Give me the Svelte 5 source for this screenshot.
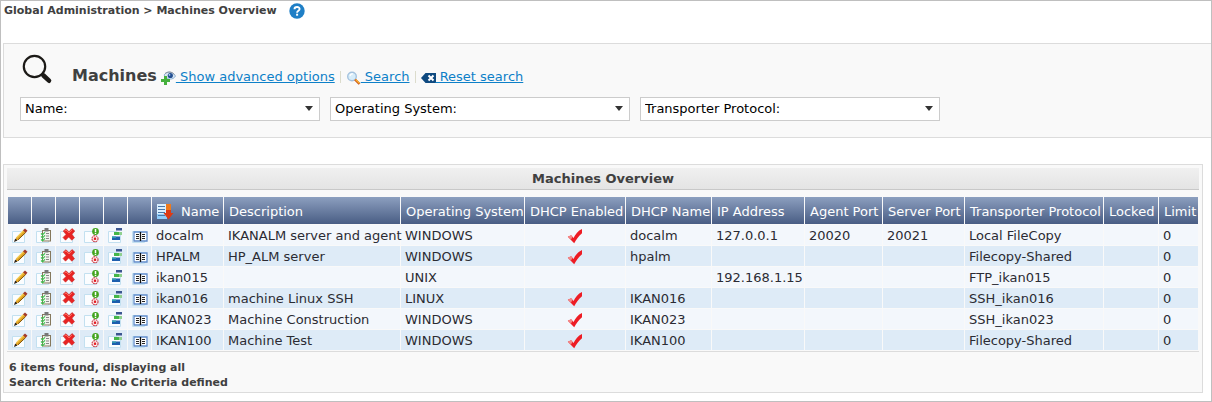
<script>
  const filters = [
    { id: 'name', label: 'Name:' },
    { id: 'os', label: 'Operating System:' },
    { id: 'protocol', label: 'Transporter Protocol:' }
  ];

  const actions = ['Edit', 'Installed phases', 'Delete', 'Status', 'Environments', 'History'];

  const columns = [
    ['Description', 176],
    ['Operating System', 123],
    ['DHCP Enabled', 100],
    ['DHCP Name', 85],
    ['IP Address', 92],
    ['Agent Port', 77],
    ['Server Port', 81],
    ['Transporter Protocol', 138],
    ['Locked', 54],
    ['Limit', 39]
  ];

  const machines = [
    { name: 'docalm', description: 'IKANALM server and agent', os: 'WINDOWS', dhcp: true, dhcpName: 'docalm', ip: '127.0.0.1', agent: '20020', server: '20021', protocol: 'Local FileCopy', limit: 0 },
    { name: 'HPALM', description: 'HP_ALM server', os: 'WINDOWS', dhcp: true, dhcpName: 'hpalm', ip: '', agent: '', server: '', protocol: 'Filecopy-Shared', limit: 0 },
    { name: 'ikan015', description: '', os: 'UNIX', dhcp: false, dhcpName: '', ip: '192.168.1.15', agent: '', server: '', protocol: 'FTP_ikan015', limit: 0 },
    { name: 'ikan016', description: 'machine Linux SSH', os: 'LINUX', dhcp: true, dhcpName: 'IKAN016', ip: '', agent: '', server: '', protocol: 'SSH_ikan016', limit: 0 },
    { name: 'IKAN023', description: 'Machine Construction', os: 'WINDOWS', dhcp: true, dhcpName: 'IKAN023', ip: '', agent: '', server: '', protocol: 'SSH_ikan023', limit: 0 },
    { name: 'IKAN100', description: 'Machine Test', os: 'WINDOWS', dhcp: true, dhcpName: 'IKAN100', ip: '', agent: '', server: '', protocol: 'Filecopy-Shared', limit: 0 }
  ];
</script>

{#snippet actionIcon(i)}
  <svg width="16" height="16" viewBox="0 0 16 16" aria-hidden="true">
    <path d="M.5 3.500H9L12.500 7V14.500H.5Z" fill="#fbfdff" stroke="#c3e0f0" />
    {#if i === 0}
      <path d="M3.200 12.500 4.500 9.300 11.500 2 14 4.300 6.500 11.800Z" fill="#e2a422" />
      <path d="M4.900 9.400 11.600 2.600" stroke="#f6d05a" stroke-width="1.200" />
      <path d="M6 11.800 13.700 4.500" stroke="#80540f" stroke-width="1" />
      <path d="M2 14 3.200 10.500 5.500 12.600Z" fill="#2b2419" />
      <path d="m11 2.300 2-1.800 2.500 2.200-1.800 2Z" fill="#a13a2c" />
    {:else if i === 1}
      <rect x="6.500" y="2.500" width="8" height="10.500" fill="#f4f4ef" stroke="#85785c" />
      <rect x="8.500" y="0" width="4" height="3.500" fill="#777" />
      <path d="M10 5.500h3M10 8h3M10 10.500h3" stroke="#888" />
      <path d="m5 5.500 1.500 1.300L9 4.300M5 8.500l1.500 1.300L9 7.300M5 11.500l1.500 1.300L9 10.300" fill="none" stroke="#35c44a" stroke-width="1.200" />
    {:else if i === 2}
      <path d="M3.200 3 6 .7 9 3.700 12 .5 14.800 3 12 6.300 14.500 9.800 11.800 12.200 8.700 9 5.500 12.200 3 9.500 6 6.500Z" fill="#e82323" stroke="#c93030" stroke-width=".6" />
      <path d="M4.500 3 6 2 9 5 12 2" fill="none" stroke="#ff6a5c" />
    {:else if i === 3}
      <circle cx="11.500" cy="3.500" r="3.400" fill="#43a51f" />
      <path d="M11.500 1v3.200M11.500 5v1" stroke="#fff" stroke-width="1.500" />
      <circle cx="11" cy="10.700" r="3" fill="#fff" stroke="#cc4650" stroke-width="1.200" stroke-dasharray="1.800 .6" />
      <rect x="9.800" y="9.500" width="2.400" height="2.400" fill="#e31b23" />
    {:else if i === 4}
      <rect x="8" y="0" width="6" height="2.500" fill="#3b5590" />
      <rect x="6" y="4" width="8" height="3" fill="#45b649" />
      <rect x="11" y="4" width="3" height="3" fill="#8fd08f" />
      <rect x="4" y="8.500" width="8" height="3.500" fill="#1e5fae" />
      <rect x="4" y="8.500" width="4" height="1.500" fill="#2f9bb0" />
    {:else}
      <path d="M2 4H15V13H2Z" fill="#fff" stroke="#5f8ccb" stroke-width="1.300" />
      <path d="M8.500 4v9" stroke="#111" stroke-width="1.300" />
      <path d="M4 6.500h3M4 8.500h3M4 10.500h3M10 6.500h3M10 8.500h3M10 10.500h3" stroke="#222" />
    {/if}
  </svg>
{/snippet}

<main>
  <nav class="crumbs" aria-label="Breadcrumb">
    <span>Global Administration &gt; Machines Overview</span>
    <a href="#help" aria-label="Help">
      <svg width="16" height="16" viewBox="0 0 16 16" aria-hidden="true">
        <circle cx="8" cy="8" r="7.700" fill="#1f7fc6" />
        <path d="M5.500 6.200C5.500 3.300 10.600 3.300 10.600 6 10.600 7.800 8.100 7.700 8.100 9.700" fill="none" stroke="#fff" stroke-width="1.900" />
        <rect x="7.100" y="10.700" width="2" height="2" fill="#fff" />
      </svg>
    </a>
  </nav>

  <form class="search" onsubmit={(e) => e.preventDefault()}>
    <div class="heading">
      <svg class="lens" width="32" height="32" viewBox="0 0 32 32" aria-hidden="true">
        <circle cx="12.500" cy="12.500" r="10.700" fill="none" stroke="#1c1a17" stroke-width="2.200" />
        <path d="m19.500 19.500 3 3" stroke="#1c1a17" stroke-width="3" />
        <path d="m21.500 21.500 5.500 5.200" stroke="#1c1a17" stroke-width="4.600" stroke-linecap="round" />
      </svg>
      <h1>Machines</h1>
      <div class="links">
        <a href="#advanced">
          <svg width="15" height="14" viewBox="0 0 15 14" aria-hidden="true">
            <path d="M3 4C6 0 11 0 14.500 5 12 9.500 6 9 3 4Z" fill="#dce8f3" stroke="#8db2d6" />
            <path d="M4 2.500C7 .3 11 .5 13.500 3.500" fill="none" stroke="#8a8f98" />
            <circle cx="9.300" cy="4.500" r="2.600" fill="#234f91" />
            <circle cx="8.500" cy="3.800" r=".9" fill="#b7d8f5" />
            <path d="M3 5h3v3h3v3h-3v3h-3v-3h-3V8h3Z" fill="#45b03c" />
          </svg><span>&nbsp;Show advanced options</span>
        </a>
        <i></i>
        <a href="#search">
          <svg width="15" height="14" viewBox="0 0 15 14" aria-hidden="true">
            <circle cx="6" cy="5.500" r="4.300" fill="#d7edfa" stroke="#a5c3df" stroke-width="1.400" />
            <path d="M4 5C4.500 3 6 2.700 7 3" fill="none" stroke="#fff" stroke-width="1.300" />
            <path d="m9 8.500 4.500 4.500" stroke="#c84c16" stroke-width="2.400" />
            <path d="m9.500 8.500 4 4" stroke="#f8b42c" stroke-width="1.100" />
          </svg><span>&nbsp;Search</span>
        </a>
        <i></i>
        <a href="#reset">
          <svg width="15" height="14" viewBox="0 0 15 14" aria-hidden="true">
            <path d="M0 7 4.500 2H15V12H4.500Z" fill="#0f4a80" />
            <path d="m7.500 4.500 5 5m0-5-5 5" stroke="#fff" stroke-width="2" />
          </svg><span>&nbsp;Reset search</span>
        </a>
      </div>
    </div>
    <div class="filters">
      {#each filters as f}
        <select id={f.id} aria-label={f.label}>
          <option>{f.label}</option>
        </select>
      {/each}
    </div>
  </form>

  <section class="results">
    <h2>Machines Overview</h2>
    <table>
      <colgroup>
        {#each actions as _}<col class="tool" />{/each}
        <col class="name" />
        {#each columns as [, width]}<col style:width="{width}px" />{/each}
      </colgroup>
      <thead>
        <tr>
          {#each actions as label}<th aria-label={label}></th>{/each}
          <th>
            <span class="sorted">
              <svg width="17" height="17" viewBox="0 0 17 17" aria-hidden="true">
                <path d="M0 1H10V16H0Z" fill="#d9efff" />
                <path d="M0 11H10V16H0Z" fill="#8fcdfb" />
                <path d="M1 3.500h7M1 6.500h7M1 9.500h7M1 12.500h7" stroke="#4b77a8" />
                <path d="M9 1h5v9h2.500L11.500 16.500 6.500 10H9Z" fill="#dd3a14" />
                <path d="M9 1h5v6h-5Z" fill="#ee7a1c" />
              </svg>
              Name
            </span>
          </th>
          {#each columns as [title]}<th>{title}</th>{/each}
        </tr>
      </thead>
      <tbody>
        {#each machines as m}
          <tr>
            {#each actions as label, i}
              <td class="action"><button type="button" aria-label="{label} {m.name}">{@render actionIcon(i)}</button></td>
            {/each}
            <td>{m.name}</td>
            <td>{m.description}</td>
            <td>{m.os}</td>
            <td class="check">
              {#if m.dhcp}
                <svg width="16" height="16" viewBox="0 0 16 16" role="img" aria-label="Yes">
                  <path d="M.8 8.800 4.200 7.300 6.500 10C8.500 6 11 2.800 15 1V5.200C11.500 8.200 9.300 11.500 7.200 15.200Z" fill="#ed1c24" />
                  <path d="m.8 8.800 3.400-1.500 1.300 1.700-1.500 2.600Z" fill="#f58a88" />
                </svg>
              {/if}
            </td>
            <td>{m.dhcpName}</td>
            <td>{m.ip}</td>
            <td>{m.agent}</td>
            <td>{m.server}</td>
            <td>{m.protocol}</td>
            <td></td>
            <td>{m.limit}</td>
          </tr>
        {/each}
      </tbody>
    </table>
    <footer>
      <p>6 items found, displaying all</p>
      <p>Search Criteria: No Criteria defined</p>
    </footer>
  </section>
</main>

<style>
  :global(body) {
    background: #fff;
  }

  main {
    box-sizing: border-box;
    min-height: 100vh;
    padding: 0 0 8px 2px;
    border: 1px solid #bfbfbf;
    font: 13px/20px Verdana, 'DejaVu Sans', sans-serif;
    color: #2b2b33;
  }

  h1, h2, p {
    margin: 0;
  }

  svg {
    display: block;
    flex: none;
  }

  .crumbs {
    display: flex;
    align-items: center;
    gap: 12px;
    height: 20px;
    padding-left: 1px;
    font-size: 11px;
    font-weight: bold;
    color: #404040;
  }

  .search {
    margin-top: 22px;
    padding: 8px 16px 16px;
    border: 1px solid #dcdcdc;
    border-right: 0;
    background: #f9f9f9;
  }

  .heading {
    display: flex;
    align-items: flex-end;
    height: 34px;
  }

  .lens {
    align-self: flex-start;
    margin: 2px 18px 0 2px;
  }

  h1 {
    margin-right: 4px;
    font-size: 16px;
    line-height: 20px;
    color: #404040;
  }

  .links {
    display: flex;
    align-items: center;
    height: 18px;
    gap: 5px;
  }

  .links a {
    display: flex;
    align-items: center;
    color: #0d80c8;
    white-space: nowrap;
    text-decoration: none;
  }

  .links a span {
    text-decoration: underline;
  }

  .links a svg {
    margin-top: 2px;
  }

  .links i {
    width: 1px;
    height: 12px;
    background: #dcdccc;
  }

  .filters {
    display: flex;
    flex-wrap: wrap;
    gap: 10px;
    margin-top: 11px;
  }

  select {
    width: 300px;
    height: 24px;
    padding: 0 20px 0 4px;
    appearance: none;
    border: 1px solid #ccc;
    border-radius: 0;
    background: #fff url("data:image/svg+xml,%3Csvg xmlns='http://www.w3.org/2000/svg' width='8' height='5'%3E%3Cpath d='M0 0H8L4 5Z' fill='%23333'/%3E%3C/svg%3E") no-repeat right 6px top 8px;
    font: inherit;
    color: #000;
  }

  .results {
    margin: 26px 8px 0 0;
    padding: 3px 3px 0;
    border: 1px solid #dcdcdc;
    background: #f9f9f9;
  }

  h2 {
    margin-bottom: 6px;
    border-bottom: 1px solid #c8c8c8;
    background: linear-gradient(#f0f0f0, #e4e4e4);
    font-size: 13px;
    line-height: 21px;
    text-align: center;
    color: #404040;
  }

  table {
    width: 100%;
    table-layout: fixed;
    border-collapse: separate;
    border-spacing: 1px;
  }

  .tool {
    width: 23px;
  }

  .name {
    width: 71px;
  }

  th,
  td {
    box-sizing: border-box;
    line-height: 18px;
    white-space: nowrap;
  }

  th {
    height: 27px;
    padding: 2px 5px 0;
    background: linear-gradient(#8c9fbf, #495d84);
    font-weight: normal;
    text-align: left;
    color: #fff;
  }

  .sorted {
    display: flex;
    align-items: center;
    gap: 7px;
  }

  td {
    height: 20px;
    padding: 2px 4px 0;
    background: #f3f7fc;
  }

  tbody tr:nth-child(even) td {
    background: #deebf7;
  }

  .action {
    padding: 2px 0 0;
  }

  button {
    display: block;
    margin: 0 auto;
    padding: 0;
    border: 0;
    background: none;
  }

  .check svg {
    margin: 0 auto;
  }

  footer {
    padding: 8px 2px 2px;
    border-top: 1px solid #dcdcdc;
    font-size: 11px;
    font-weight: bold;
    line-height: 15px;
    color: #404040;
  }
</style>
